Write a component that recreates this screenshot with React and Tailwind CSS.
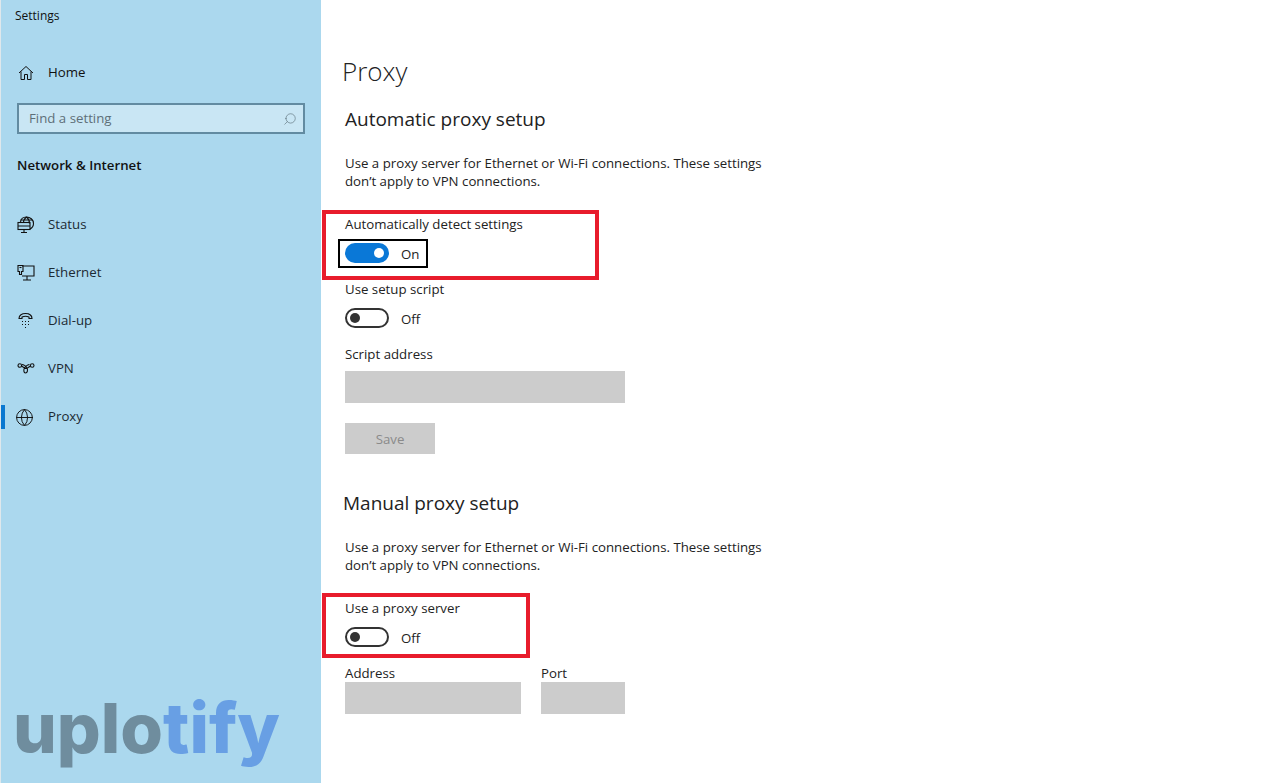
import React from "react";
import { Search, Globe } from "lucide-react";

const font = "font-['Open_Sans',sans-serif]";

const HomeIcon = () => (
  <svg width="16" height="16" viewBox="0 0 16 16" fill="none" stroke="#111" strokeWidth="1">
    <path d="M1 8l7-6.5L15 8M3 6.500V14.500h3.500V9.500h3v5H13V6.500" />
  </svg>
);

const StatusIcon = () => (
  <svg width="18" height="18" viewBox="0 0 18 18" fill="none" stroke="#111" strokeWidth="1.1">
    <path d="M3.500 6.500C3.500 3 6 1 9.500 1s7 2.500 7 6.500c0 2.500-1.500 4.500-3.500 5.500" />
    <path d="M9.500 1C7.500 2.500 6.500 4.500 6.500 6.500M9.500 1c2 1.500 3 3.500 3 6.500M3.500 4h12" />
    <rect x="1" y="6.500" width="12" height="7" />
    <path d="M1 10h12M7 13.500v3M4 16.500h6" />
  </svg>
);

const EthernetIcon = () => (
  <svg width="18" height="18" viewBox="0 0 18 18" fill="none" stroke="#111" strokeWidth="1.1">
    <path d="M5 2h12v10H5M10 12v4M6 16h8" />
    <path d="M1 1.500h5v6H4.500v3h-2v-3H1z" />
    <path d="M2.500 3.500h2" />
  </svg>
);

const DialupIcon = () => (
  <svg width="18" height="18" viewBox="0 0 18 18" fill="none" stroke="#111" strokeWidth="1.1">
    <path d="M2 6.500C2 3 5 1.500 8.500 1.500S15 3 15 6.500h-3V5c-2-.8-5-.8-7 0v1.500z" />
    <path d="M5 9.500h1M8 9.500h1M11 9.500h1M5 12.500h1M8 12.500h1M11 12.500h1M8 15.500h1" />
  </svg>
);

const VpnIcon = () => (
  <svg width="18" height="18" viewBox="0 0 18 18" fill="none" stroke="#111" strokeWidth="1.1">
    <circle cx="2.800" cy="5.500" r="1.800" />
    <circle cx="15.200" cy="5.500" r="1.800" />
    <path d="M4.500 6c1.500 1 3 2.500 4.500 2.500S12 7 13.500 6M12.500 4.500c-2 0-3.500 1.500-5 3.500-1 1.500-1 5 1 5s2.500-3 1.500-5c-1-1.500-2.500-3.500-5-3.500" />
  </svg>
);

const navItems = [
  { label: "Status", icon: <StatusIcon /> },
  { label: "Ethernet", icon: <EthernetIcon /> },
  { label: "Dial-up", icon: <DialupIcon /> },
  { label: "VPN", icon: <VpnIcon /> },
  { label: "Proxy", icon: <Globe size={19} strokeWidth={1.2} color="#111" className="-ml-0.5" />, active: true },
];

const Toggle = ({ on }) => (
  <div className="flex items-center gap-3">
    <div
      className={
        on
          ? "flex h-5 w-11 items-center justify-end rounded-full bg-[#0a78d7] pr-[5px]"
          : "flex h-5 w-11 items-center justify-start rounded-full border-2 border-[#333] pl-[3px]"
      }
    >
      <div className={on ? "h-2.5 w-2.5 rounded-full bg-white" : "h-2.5 w-2.5 rounded-full bg-[#333]"} />
    </div>
    <span className="h-5 text-[13.25px] leading-[22px] text-[#222]">{on ? "On" : "Off"}</span>
  </div>
);

const Label = ({ children }) => <div className="h-[18px] text-[13.25px] leading-[18px] text-[#222]">{children}</div>;

const Blurb = () => (
  <p className="w-[432px] text-[13.25px] leading-[18px] text-[#222]">
    Use a proxy server for Ethernet or Wi-Fi connections. These settings don’t apply to VPN connections.
  </p>
);

const App = () => {
  return (
    <div className={`relative flex h-[783px] w-[1280px] overflow-hidden bg-white ${font}`}>
      <aside className="relative flex w-[321px] shrink-0 flex-col border-l border-[#dfe8ec] bg-[#abd8ee] text-[#111]">
        <div className="h-[32px] pl-3.5 pt-2 text-xs leading-4">Settings</div>

        <div className="mt-[29px] flex h-6 items-center pl-[17px]">
          <HomeIcon />
          <span className="ml-[14px] text-[13.25px]">Home</span>
        </div>

        <div className="ml-4 mt-[18px] flex h-[31px] w-[288px] items-center justify-between border-2 border-[#628ba1] bg-[#c9e6f4] pl-[10px] pr-[6px]">
          <span className="text-[13.25px] text-[#5e6f78]">Find a setting</span>
          <Search size={14} strokeWidth={1} color="#52666f" className="-scale-x-100" />
        </div>

        <div className="ml-4 mt-[22px] text-[13.25px] font-semibold leading-[18px]">Network &amp; Internet</div>

        <nav className="mt-[27px] flex flex-col">
          {navItems.map((item) => (
            <div key={item.label} className="relative flex h-12 items-center pl-[16px]">
              {item.active && <div className="absolute left-0 top-3 h-6 w-1 bg-[#0a78d0]" />}
              <div className="flex w-[31px] items-center">{item.icon}</div>
              <span className="text-[13.25px] text-[#1c2a33]">{item.label}</span>
            </div>
          ))}
        </nav>

        <div className="absolute bottom-[15px] left-[12px] flex font-['Inter',sans-serif] text-[69px] font-extrabold leading-[80px]">
          <span className="text-[#6f8d9e]">uplo</span>
          <span className="text-[#689fe4]">tify</span>
        </div>
      </aside>

      <main className="pl-[22px] pt-[51px]">
        <h1 className="-ml-px h-10 text-[26px] font-light leading-10 text-[#222]">Proxy</h1>
        <h2 className="ml-0.5 mt-[16px] h-6 text-[19px] leading-6 text-[#222]">Automatic proxy setup</h2>

        <div className="ml-0.5 mt-[23px]">
          <Blurb />
        </div>

        <div className="ml-0.5 mt-[25px]">
          <Label>Automatically detect settings</Label>
          <div className="mt-[10px]">
            <Toggle on />
          </div>

          <div className="mt-[17px]">
            <Label>Use setup script</Label>
          </div>
          <div className="mt-[10px]">
            <Toggle />
          </div>

          <div className="mt-[17px]">
            <Label>Script address</Label>
          </div>
          <div className="mt-2 h-8 w-[280px] bg-[#cccccc]" />
          <div className="mt-5 flex h-[31px] w-[90px] items-center justify-center bg-[#cccccc] pt-0.5 text-[13.25px] text-[#8a8a8a]">
            Save
          </div>
        </div>

        <h2 className="mt-[37px] h-6 text-[19px] leading-6 text-[#222]">Manual proxy setup</h2>

        <div className="ml-0.5 mt-[23px]">
          <Blurb />
        </div>

        <div className="ml-0.5 mt-[25px]">
          <Label>Use a proxy server</Label>
          <div className="mt-[10px]">
            <Toggle />
          </div>

          <div className="mt-[17px] flex gap-5">
            <div className="w-[176px]">
              <Label>Address</Label>
              <div className="h-8 bg-[#cccccc]" />
            </div>
            <div className="w-[84px]">
              <Label>Port</Label>
              <div className="h-8 bg-[#cccccc]" />
            </div>
          </div>
        </div>
      </main>

      {/* annotations over the screenshot */}
      <div className="absolute left-[322px] top-[210px] h-[70px] w-[277px] border-[4px] border-[#e81c2c]" />
      <div className="absolute left-[322px] top-[593px] h-[65px] w-[208px] border-[4px] border-[#e81c2c]" />
      <div className="absolute left-[338px] top-[239px] h-[29px] w-[90px] border-2 border-black" />
    </div>
  );
};

export default App;
